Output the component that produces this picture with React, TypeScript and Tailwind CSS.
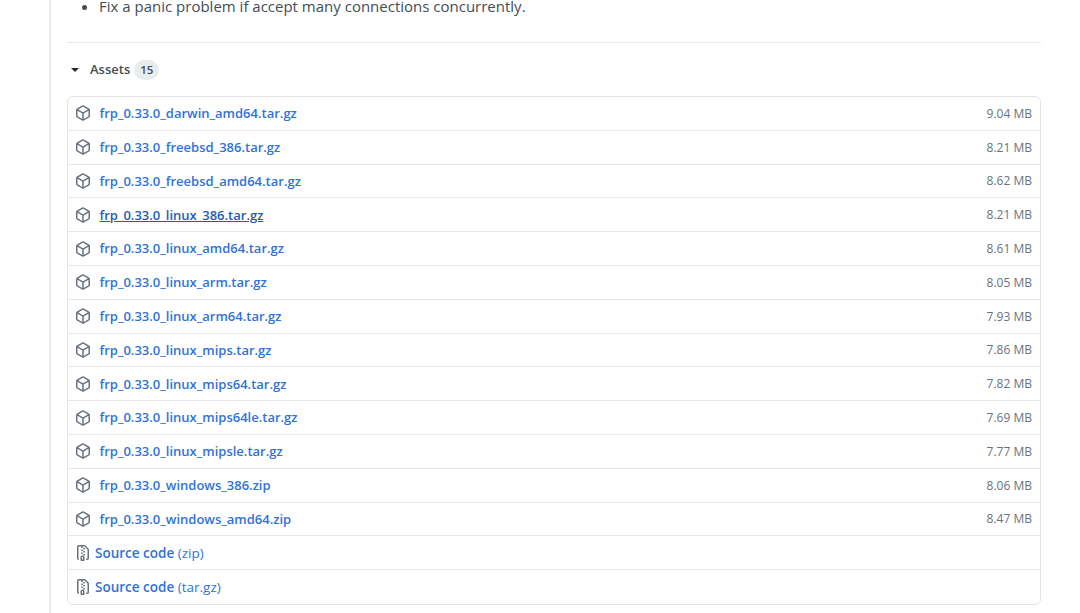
const packages = [
  { name: 'frp_0.33.0_darwin_amd64.tar.gz', size: '9.04 MB' },
  { name: 'frp_0.33.0_freebsd_386.tar.gz', size: '8.21 MB' },
  { name: 'frp_0.33.0_freebsd_amd64.tar.gz', size: '8.62 MB' },
  { name: 'frp_0.33.0_linux_386.tar.gz', size: '8.21 MB', hovered: true },
  { name: 'frp_0.33.0_linux_amd64.tar.gz', size: '8.61 MB' },
  { name: 'frp_0.33.0_linux_arm.tar.gz', size: '8.05 MB' },
  { name: 'frp_0.33.0_linux_arm64.tar.gz', size: '7.93 MB' },
  { name: 'frp_0.33.0_linux_mips.tar.gz', size: '7.86 MB' },
  { name: 'frp_0.33.0_linux_mips64.tar.gz', size: '7.82 MB' },
  { name: 'frp_0.33.0_linux_mips64le.tar.gz', size: '7.69 MB' },
  { name: 'frp_0.33.0_linux_mipsle.tar.gz', size: '7.77 MB' },
  { name: 'frp_0.33.0_windows_386.zip', size: '8.06 MB' },
  { name: 'frp_0.33.0_windows_amd64.zip', size: '8.47 MB' },
];

const PackageIcon = () => (
  <svg viewBox="0 0 16 16" className="w-4 h-4 fill-[#6a737d] shrink-0">
    <path
      fillRule="evenodd"
      d="M8.878.392a1.75 1.75 0 00-1.756 0l-5.25 3.045A1.75 1.75 0 001 4.951v6.098c0 .624.332 1.2.872 1.514l5.25 3.045a1.75 1.75 0 001.756 0l5.25-3.045c.54-.313.872-.89.872-1.514V4.951c0-.624-.332-1.2-.872-1.514L8.878.392zM7.875 1.69a.25.25 0 01.25 0l4.63 2.685L8 7.133 3.245 4.375l4.63-2.685zM2.5 5.677v5.372c0 .09.047.171.125.216l4.625 2.683V8.432L2.5 5.677zm6.25 8.271l4.625-2.683a.25.25 0 00.125-.216V5.677L8.75 8.432v5.516z"
    />
  </svg>
);

const ZipIcon = () => (
  <svg viewBox="0 0 16 16" className="w-4 h-4 fill-[#6a737d] shrink-0">
    <path
      fillRule="evenodd"
      d="M3.5 1.75a.25.25 0 01.25-.25h3a.75.75 0 000 1.5h.5a.75.75 0 000-1.5h2.086a.25.25 0 01.177.073l2.914 2.914a.25.25 0 01.073.177v8.586a.25.25 0 01-.25.25h-.5a.75.75 0 000 1.5h.5A1.75 1.75 0 0014 13.25V4.664c0-.464-.184-.909-.513-1.237L10.573.513A1.75 1.75 0 009.336 0H3.75A1.75 1.75 0 002 1.75v11.5c0 .649.353 1.214.874 1.515a.75.75 0 10.752-1.298.25.25 0 01-.126-.217V1.75zM8.75 3a.75.75 0 000 1.5h.5a.75.75 0 000-1.5h-.5zM6 5.25a.75.75 0 01.75-.75h.5a.75.75 0 010 1.5h-.5A.75.75 0 016 5.25zm2 1.5A.75.75 0 018.75 6h.5a.75.75 0 010 1.5h-.5A.75.75 0 018 6.75zm-1.25.75a.75.75 0 000 1.5h.5a.75.75 0 000-1.5h-.5zM8 9.75A.75.75 0 018.75 9h.5a.75.75 0 010 1.5h-.5A.75.75 0 018 9.75zm-.75.75a1.75 1.75 0 00-1.75 1.75v3c0 .414.336.75.75.75h2.5a.75.75 0 00.75-.75v-3a1.75 1.75 0 00-1.75-1.75h-.5zM7 12.25a.25.25 0 01.25-.25h.5a.25.25 0 01.25.25v2.25H7v-2.25z"
    />
  </svg>
);

export default function App() {
  return (
    <div className="h-[613px] overflow-hidden bg-white font-['Open_Sans',sans-serif] text-[14px]">
      <div className="ml-[49px] h-full border-l-2 border-[#e8eaed] pl-[16px] pr-[39px]">
        <div className="h-[43px] border-b border-[#e6e8eb]">
          <ul className="pl-[32px] list-disc text-[#444d56] leading-[13px]">
            <li className="text-[15px]">Fix a panic problem if accept many connections concurrently.</li>
          </ul>
        </div>

        <div className="flex items-center h-[53px]">
          <span className="ml-[4px] mr-[11px] w-0 h-0 border-x-[4px] border-x-transparent border-t-[4px] border-t-[#24292e]" />
          <span className="font-semibold text-[13px] text-[#444d56]">Assets</span>
          <span className="ml-[4px] px-[6px] h-[20px] flex items-center rounded-full bg-[#e9ecef] text-[11.5px] font-semibold text-[#444d56]">15</span>
        </div>

        <div className="border border-[#e1e4e8] rounded-md">
          {packages.map(pkg => (
            <div key={pkg.name} className="flex items-center h-[33.8px] border-b border-[#e6e8eb] pl-[7px] pr-[8px]">
              <PackageIcon />
              <a className={`ml-[8.5px] mt-[1px] font-semibold text-[13px] ${pkg.hovered ? 'text-[#1f5cb5] underline' : 'text-[#3173d6]'}`}>{pkg.name}</a>
              <span className="ml-auto mt-[1px] text-[12px] text-[#6a737d]">{pkg.size}</span>
            </div>
          ))}
          <div className="flex items-center h-[33.8px] border-b border-[#e6e8eb] pl-[7px]">
            <ZipIcon />
            <a className="ml-[4px] mt-[1px] text-[13.5px] text-[#3173d6]"><span className="font-semibold">Source code</span> (zip)</a>
          </div>
          <div className="flex items-center h-[33.8px] pl-[7px]">
            <ZipIcon />
            <a className="ml-[4px] mt-[1px] text-[13.5px] text-[#3173d6]"><span className="font-semibold">Source code</span> (tar.gz)</a>
          </div>
        </div>
      </div>
    </div>
  );
}
